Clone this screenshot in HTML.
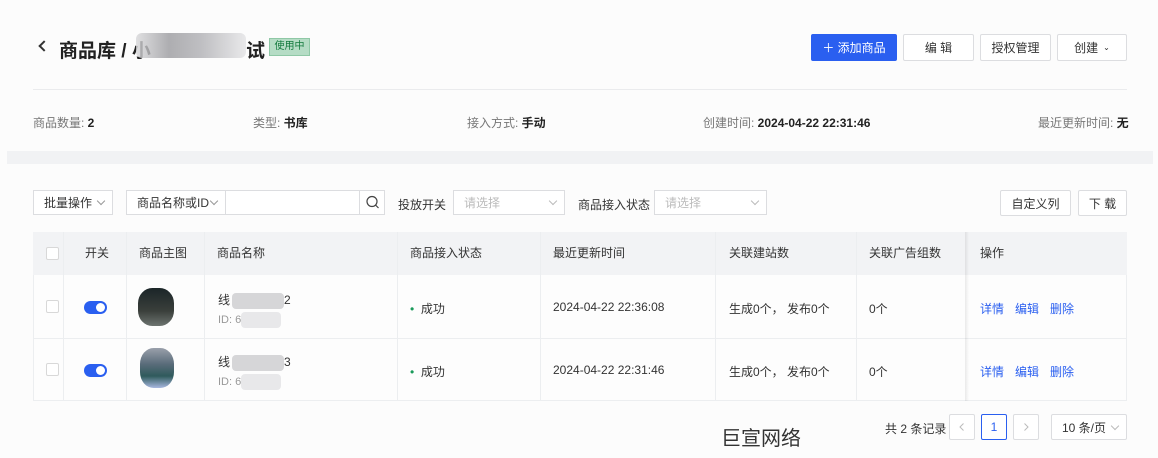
<!DOCTYPE html>
<html><head><meta charset="utf-8"><style>
*{box-sizing:border-box;margin:0;padding:0}
body{width:1158px;height:458px;background:#fcfcfc;font-family:"Liberation Sans","Noto Sans CJK SC",sans-serif;font-size:12px;color:#333;position:relative;overflow:hidden}
.a{position:absolute}
.btn{position:absolute;height:27px;border:1px solid #dcdde0;background:#fff;display:flex;align-items:center;justify-content:center;font-size:12px;color:#333;border-radius:2px}
.sel{position:absolute;height:25px;border:1px solid #dcdde0;background:#fff;display:flex;align-items:center;padding-left:10px;color:#333}
.ch{position:absolute;right:8px;top:7px;width:6px;height:6px;border-right:1px solid #999;border-bottom:1px solid #999;transform:rotate(45deg)}
.ph{color:#bbb}
.th{position:absolute;top:232px;height:43px;line-height:43px;color:#333}
.cb{position:absolute;width:13px;height:13px;border:1px solid #d8d8d8;background:#fff;border-radius:2px}
.tg{position:absolute;width:23px;height:13px;border-radius:7px;background:#2a5ff0}
.tg:after{content:"";position:absolute;right:2px;top:2px;width:9px;height:9px;border-radius:50%;background:#fff}
.vl{position:absolute;top:232px;height:169px;width:1px;background:#eceef0}
.lk{position:absolute;color:#2a5ff0}
.blur{display:inline-block;vertical-align:middle;background:#d6d6d8;border-radius:4px}
</style></head><body>
<div class="a" style="left:40px;top:42px;width:8px;height:8px;border-left:2px solid #333;border-bottom:2px solid #333;transform:rotate(45deg)"></div>
<div class="a" style="left:59px;top:36px;font-size:19px;font-weight:bold;color:#222">商品库 / 小</div>
<div class="a" style="left:136px;top:33px;width:110px;height:25px;background:linear-gradient(90deg,#d8d8da,#9a9a9e 30%,#b0b0b4 60%,#e4e4e6);border-radius:6px;opacity:.8"></div>
<div class="a" style="left:246px;top:36px;font-size:19px;font-weight:bold;color:#222">试</div>
<div class="a" style="left:269px;top:38px;width:41px;height:18px;background:#b5dcc5;border:1px solid #8fc8a6;color:#147a3e;font-size:10px;line-height:16px;text-align:center">使用中</div>

<div class="btn" style="left:811px;top:34px;width:86px;background:#2a5ff0;border-color:#2a5ff0;color:#fff">＋ 添加商品</div>
<div class="btn" style="left:903px;top:34px;width:71px">编 辑</div>
<div class="btn" style="left:980px;top:34px;width:71px">授权管理</div>
<div class="btn" style="left:1057px;top:34px;width:70px">创建 <span style="font-size:8px;margin-left:5px">⌄</span></div>

<div class="a" style="left:33px;top:89px;width:1094px;height:1px;background:#eaebed"></div>
<div class="a" style="left:33px;top:114px;color:#777">商品数量: <b style="color:#222">2</b></div>
<div class="a" style="left:253px;top:114px;color:#777">类型: <b style="color:#222">书库</b></div>
<div class="a" style="left:467px;top:114px;color:#777">接入方式: <b style="color:#222">手动</b></div>
<div class="a" style="left:703px;top:114px;color:#777">创建时间: <b style="color:#222">2024-04-22 22:31:46</b></div>
<div class="a" style="left:1038px;top:114px;color:#777">最近更新时间: <b style="color:#222">无</b></div>
<div class="a" style="left:7px;top:151px;width:1146px;height:13px;background:#f1f2f4"></div>

<div class="sel" style="left:33px;top:190px;width:80px">批量操作<i class="ch"></i></div>
<div class="sel" style="left:126px;top:190px;width:100px">商品名称或ID<i class="ch"></i></div>
<div class="sel" style="left:225px;top:190px;width:135px"></div>
<div class="sel" style="left:359px;top:190px;width:26px;padding:0"><svg width="26" height="25"><circle cx="12" cy="11.5" r="5" fill="none" stroke="#444" stroke-width="1.2"/><path d="M15.5 15l3 3" stroke="#444" stroke-width="1.2"/></svg></div>
<div class="a" style="left:398px;top:196px">投放开关</div>
<div class="sel" style="left:453px;top:190px;width:112px"><span class="ph">请选择</span><i class="ch" style="border-color:#bbb"></i></div>
<div class="a" style="left:578px;top:196px">商品接入状态</div>
<div class="sel" style="left:654px;top:190px;width:113px"><span class="ph">请选择</span><i class="ch" style="border-color:#bbb"></i></div>
<div class="btn" style="left:1000px;top:190px;width:71px;height:26px">自定义列</div>
<div class="btn" style="left:1078px;top:190px;width:49px;height:26px">下 载</div>

<div class="a" style="left:33px;top:232px;width:1094px;height:169px;border:1px solid #eceef0;background:#fdfdfd"></div>
<div class="a" style="left:33px;top:232px;width:1094px;height:43px;background:#f2f3f5"></div>
<div class="a" style="left:33px;top:338px;width:1094px;height:1px;background:#eceef0"></div>
<div class="vl" style="left:63px"></div><div class="vl" style="left:126px"></div><div class="vl" style="left:204px"></div><div class="vl" style="left:397px"></div><div class="vl" style="left:540px"></div><div class="vl" style="left:715px"></div><div class="vl" style="left:856px"></div>
<div class="a" style="left:965px;top:232px;width:4px;height:169px;background:linear-gradient(90deg,rgba(0,0,0,.08),rgba(0,0,0,0))"></div>

<div class="cb" style="left:46px;top:247px"></div>
<div class="th" style="left:85px">开关</div><div class="th" style="left:139px">商品主图</div><div class="th" style="left:217px">商品名称</div><div class="th" style="left:410px">商品接入状态</div><div class="th" style="left:553px">最近更新时间</div><div class="th" style="left:729px">关联建站数</div><div class="th" style="left:869px">关联广告组数</div><div class="th" style="left:980px">操作</div>

<div class="cb" style="left:46px;top:300px"></div>
<div class="tg" style="left:84px;top:301px"></div>
<div class="a" style="left:138px;top:288px;width:36px;height:38px;background:linear-gradient(180deg,#1b2528,#3a3f3b 60%,#6d7470);border-radius:40%"></div>
<div class="a" style="left:218px;top:291px">线<span class="blur" style="width:52px;height:16px;margin-left:2px"></span>2</div>
<div class="a" style="left:218px;top:312px;color:#999;font-size:11px">ID: 6<span class="blur" style="width:40px;height:16px;background:#e8e8ea"></span></div>
<div class="a" style="left:410px;top:300px"><span style="color:#1a9a5a">•</span>&nbsp; 成功</div>
<div class="a" style="left:553px;top:300px">2024-04-22 22:36:08</div>
<div class="a" style="left:729px;top:300px">生成0个， 发布0个</div>
<div class="a" style="left:869px;top:300px">0个</div>
<div class="lk" style="left:980px;top:300px">详情</div><div class="lk" style="left:1015px;top:300px">编辑</div><div class="lk" style="left:1050px;top:300px">删除</div>

<div class="cb" style="left:46px;top:363px"></div>
<div class="tg" style="left:84px;top:364px"></div>
<div class="a" style="left:140px;top:348px;width:34px;height:40px;background:linear-gradient(180deg,#9aa0ab,#5a6c7a 40%,#2f5a5c 70%,#a8b8e0);border-radius:40%"></div>
<div class="a" style="left:218px;top:353px">线<span class="blur" style="width:52px;height:16px;margin-left:2px"></span>3</div>
<div class="a" style="left:218px;top:374px;color:#999;font-size:11px">ID: 6<span class="blur" style="width:40px;height:16px;background:#e8e8ea"></span></div>
<div class="a" style="left:410px;top:363px"><span style="color:#1a9a5a">•</span>&nbsp; 成功</div>
<div class="a" style="left:553px;top:363px">2024-04-22 22:31:46</div>
<div class="a" style="left:729px;top:363px">生成0个， 发布0个</div>
<div class="a" style="left:869px;top:363px">0个</div>
<div class="lk" style="left:980px;top:363px">详情</div><div class="lk" style="left:1015px;top:363px">编辑</div><div class="lk" style="left:1050px;top:363px">删除</div>

<div class="a" style="left:721px;top:422px;font-size:20px;color:#333">巨宣网络</div>
<div class="a" style="left:885px;top:420px">共 2 条记录</div>
<div class="btn" style="left:949px;top:414px;width:26px;height:26px"><svg width="10" height="10"><path d="M6.5 1.5L3 5l3.5 3.5" fill="none" stroke="#bbb"/></svg></div>
<div class="btn" style="left:981px;top:414px;width:26px;height:26px;border-color:#2a5ff0;color:#2a5ff0">1</div>
<div class="btn" style="left:1013px;top:414px;width:26px;height:26px"><svg width="10" height="10"><path d="M3.5 1.5L7 5 3.5 8.5" fill="none" stroke="#bbb"/></svg></div>
<div class="btn" style="left:1051px;top:414px;width:76px;height:26px;justify-content:flex-start;padding-left:10px">10 条/页<i class="ch" style="top:8px;border-color:#bbb"></i></div>
</body></html>
